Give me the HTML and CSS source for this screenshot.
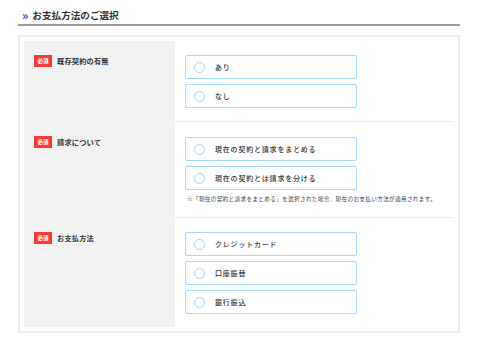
FILE: index.html
```html
<!DOCTYPE html>
<html lang="ja">
<head>
<meta charset="utf-8">
<link rel="stylesheet" href="styles.css">
</head>
<body>
<div class="wrap">
  <h2 class="title"><span class="chev">»</span>お支払方法のご選択</h2>
  <div class="box">
    <div class="row">
      <div class="label"><span class="badge">必須</span><span class="ltext">既存契約の有無</span></div>
      <div class="field">
        <label class="opt"><span class="circle"></span><span class="otext">あり</span></label>
        <label class="opt"><span class="circle"></span><span class="otext">なし</span></label>
      </div>
    </div>
    <div class="row">
      <div class="label"><span class="badge">必須</span><span class="ltext">請求について</span></div>
      <div class="field">
        <label class="opt"><span class="circle"></span><span class="otext">現在の契約と請求をまとめる</span></label>
        <label class="opt"><span class="circle"></span><span class="otext">現在の契約とは請求を分ける</span></label>
        <p class="note">※「現在の契約と請求をまとめる」を選択された場合、現在のお支払い方法が適用されます。</p>
      </div>
    </div>
    <div class="row last">
      <div class="label"><span class="badge">必須</span><span class="ltext">お支払方法</span></div>
      <div class="field">
        <label class="opt"><span class="circle"></span><span class="otext">クレジットカード</span></label>
        <label class="opt"><span class="circle"></span><span class="otext">口座振替</span></label>
        <label class="opt"><span class="circle"></span><span class="otext">銀行振込</span></label>
      </div>
    </div>
  </div>
</div>
</body>
</html>
```
FILE: styles.css
```css
* { box-sizing: border-box; }
html, body { margin: 0; padding: 0; background: #fff; }
body {
  font-family: "Noto Sans CJK JP", "Noto Sans", sans-serif;
  color: #333;
}
.wrap {
  margin: 0 20px 0 18px;
}
.title {
  margin: 0;
  height: 26px;
  padding: 6px 0 0 4px;
  font-size: 9.6px;
  line-height: 14px;
  font-weight: 700;
  color: #333;
  border-bottom: 2px solid #9a9a9a;
  display: flex;
  align-items: center;
}
.chev {
  color: #2450d8;
  font-size: 12px;
  font-weight: 700;
  margin-right: 4px;
  line-height: 14px;
}
.box {
  margin-top: 9px;
  border: 2px solid #efefef;
  padding: 4px;
}
.row {
  display: grid;
  grid-template-columns: 151px 1fr;
}
.label {
  background: #f1f1f1;
  padding: 14px 0 0 10px;
  display: flex;
  align-items: flex-start;
  gap: 5px;
  border-bottom: 1px solid #f6f6f6;
}
.row.last .label { border-bottom: none; }
.badge {
  display: inline-flex;
  align-items: center;
  justify-content: center;
  width: 18px;
  height: 12px;
  background: #f23b3b;
  color: #fff;
  font-size: 5.6px;
  font-weight: 700;
  flex: none;
}
.ltext {
  font-size: 7.2px;
  font-weight: 700;
  letter-spacing: 0.2px;
  line-height: 12px;
  color: #333;
}
.field {
  padding: 14px 0 13px 10px;
  border-bottom: 1px solid #ececec;
}
.row:nth-child(2) .field { padding-top: 15px; padding-bottom: 14px; }
.row.last .field { border-bottom: none; }
.opt {
  display: flex;
  align-items: center;
  width: 172px;
  height: 24px;
  border: 1.5px solid #a6d9fc;
  border-radius: 2px;
  padding-left: 8px;
  margin-bottom: 5px;
  background: #fff;
}
.opt:last-child { margin-bottom: 0; }
.circle {
  width: 11px;
  height: 11px;
  border: 1.5px solid #a6d6f7;
  border-radius: 50%;
  flex: none;
  margin-right: 10px;
}
.otext {
  font-size: 7px;
  font-weight: 500;
  letter-spacing: 0.8px;
  color: #333;
  line-height: 10px;
}
.note {
  margin: 5px 0 0 2px;
  font-size: 5.6px;
  letter-spacing: 0.35px;
  line-height: 8px;
  color: #444;
  white-space: nowrap;
}
```
